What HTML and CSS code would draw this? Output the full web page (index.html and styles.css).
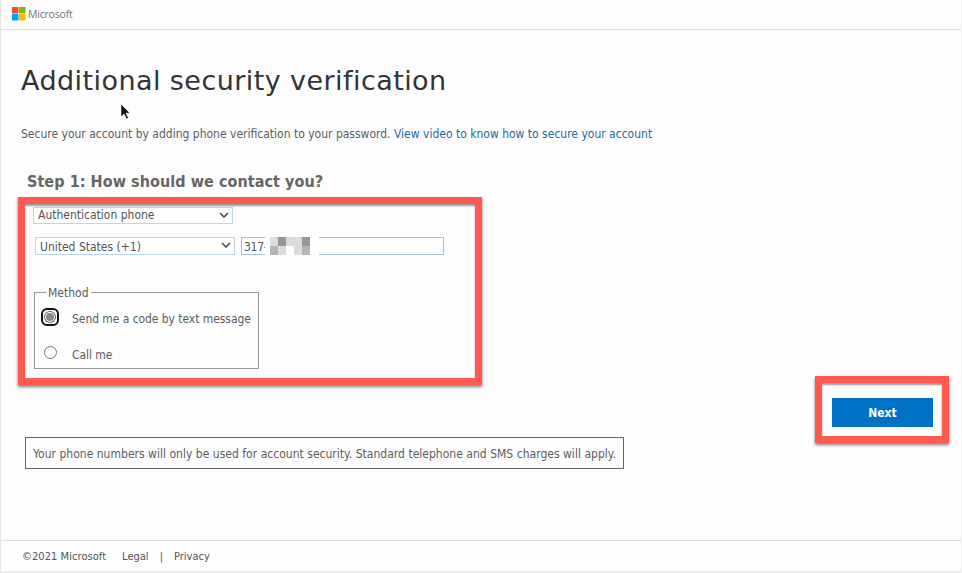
FILE: index.html
```html
<!DOCTYPE html>
<html lang="en">
<head>
<meta charset="utf-8">
<title>Additional security verification</title>
<link rel="stylesheet" href="styles.css">
</head>
<body>
<div class="page">
  <header class="topbar">
    <svg class="logo" width="14" height="14" viewBox="0 0 14 14"><rect width="6.5" height="6.5" fill="#f25022"/><rect x="7" width="6.5" height="6.5" fill="#7fba00"/><rect y="7" width="6.5" height="6.5" fill="#00a4ef"/><rect x="7" y="7" width="6.5" height="6.5" fill="#ffb900"/></svg>
    <span class="brand">Microsoft</span>
  </header>
  <main class="content">
    <h1 class="title">Additional security verification</h1>
    <p class="intro">Secure your account by adding phone verification to your password. <a class="link" href="#">View video to know how to secure your account</a></p>
    <h2 class="step">Step 1: How should we contact you?</h2>
    <div class="form">
      <div class="select select-type">Authentication phone<svg class="chev" width="10" height="6" viewBox="0 0 10 6"><path d="M1 1l4 4 4-4" fill="none" stroke="#444" stroke-width="1.5"/></svg></div>
      <div class="phone-row">
        <div class="select select-country">United States (+1)<svg class="chev" width="10" height="6" viewBox="0 0 10 6"><path d="M1 1l4 4 4-4" fill="none" stroke="#444" stroke-width="1.5"/></svg></div>
        <div class="phone">317-<div class="blur">
            <i class="w"></i><i class="l"></i><i class="d"></i><i class="l"></i><i class="l"></i><i class="d"></i><i class="w"></i>
            <i class="w"></i><i class="m"></i><i class="l"></i><i class="w"></i><i class="l"></i><i class="m"></i><i class="w"></i>
          </div>
        </div>
      </div>
      <fieldset class="method">
        <legend class="legend">Method</legend>
        <div class="option option-first"><span class="radio radio-on"><span class="dot"></span></span><span>Send me a code by text message</span></div>
        <div class="option option-second"><span class="radio"></span><span>Call me</span></div>
      </fieldset>
    </div>
    <div class="actions"><button class="next" type="button">Next</button></div>
    <div class="notice">Your phone numbers will only be used for account security. Standard telephone and SMS charges will apply.</div>
  </main>
  <footer class="footer">
    <span class="copy">©2021 Microsoft</span><a class="foot-link" href="#">Legal</a><span class="sep">|</span><a class="foot-link" href="#">Privacy</a>
  </footer>
  <div class="callout callout-form"></div>
  <div class="callout callout-next"></div>
  <svg class="cursor" width="12" height="18" viewBox="0 0 12 18"><path d="M1 1v13l3-3 2.500 5 2-1-2.500-4.800H10z" fill="#111" stroke="#fff" stroke-width=".6"/></svg>
</div>
</body>
</html>
```
FILE: styles.css
```css
* { box-sizing: border-box; }
html, body { margin: 0; height: 100%; background: #eee; overflow: hidden; }
body { font-family: "DejaVu Sans", sans-serif; font-stretch: condensed; font-size: 12px; color: #5c5c5c; }
.page { position: relative; width: 961px; height: 571px; background: #fdfdfd; border-left: 1px solid #e4e4e4; display: flex; flex-direction: column; }
.topbar { height: 30px; border-bottom: 1px solid #ddd; display: flex; align-items: center; padding: 0 0 0 11px; gap: 2px; }
.logo { flex: none; margin-top: -1px; }
.brand { font-family: "Open Sans", sans-serif; font-stretch: normal; font-size: 10.5px; letter-spacing: -.2px; color: #737373; margin-top: -2px; }
.content { flex: 1; padding: 0 0 0 20px; }
.title { margin: 32px 0 0; font-weight: 400; font-size: 27px; line-height: 38px; color: #333; font-stretch: normal; letter-spacing: .43px; }
.intro { margin: 26px 0 0; line-height: 16px; }
.link { color: #1b6a9c; text-decoration: none; }
.step { margin: 30px 0 0 6px; font-size: 16px; line-height: 20px; font-weight: 700; color: #666; letter-spacing: .06px; }
.form { margin: 19px 0 0 11px; height: 170px; display: flex; flex-direction: column; align-items: flex-start; }
.select { position: relative; width: 200px; height: 17px; border: 1px solid #b9d6ea; line-height: 15px; padding-left: 4px; background: #fff; color: #555; }
.select-type { margin-left: 1px; margin-top: -4px; }
.chev { position: absolute; right: 3px; top: 4px; }
.phone-row { display: flex; gap: 6px; margin: 14px 0 0 3px; }
.select-country { height: 18px; margin-top: -1px; line-height: 18px; }
.phone { position: relative; width: 203px; height: 18px; margin-top: -1px; border: 1px solid #a9c1d3; line-height: 18px; padding-left: 2px; background: #fff; color: #555; letter-spacing: -.3px; }
.blur { position: absolute; left: 23px; top: -1px; width: 54px; height: 18px; display: grid; grid-template-columns: 5px repeat(5, 8px) 9px; grid-template-rows: 9px 9px; background: #fff; }
.w { background: #fff; }
.l { background: #dcdcdc; }
.m { background: #b4b4b4; }
.d { background: #969696; }
.method { margin: 30px 0 0 2px; padding: 0; width: 225px; height: 84px; border: 1px solid #999; position: relative; min-inline-size: 0; }
.legend { margin-left: 11px; padding: 2px 2px 0; line-height: 12px; }
.option { display: flex; align-items: center; letter-spacing: -.06px; }
.option-first { margin: 13px 0 0 6px; }
.option-second { margin: 22px 0 0 9px; }
.radio { flex: none; width: 13px; height: 13px; border: 1px solid #777; border-radius: 50%; margin: -5px 15px 0 0; background: #fff; }
.radio-on { width: 18px; height: 18px; border: 2px solid #111; border-radius: 6px; display: flex; align-items: center; justify-content: center; margin: -4px 13px 0 0; }
.dot { border-radius: 50%; background: #888; box-shadow: 0 0 0 1px #fff, 0 0 0 2px #666; width: 8px; height: 8px; }
.actions { display: flex; justify-content: flex-end; padding-right: 28px; margin-top: 17px; }
.next { width: 101px; height: 29px; border: 0; background: #0072c6; color: #fff; font: inherit; font-weight: 700; padding: 0; }
.notice { margin: 10px 0 0 4px; width: 599px; height: 32px; border: 1px solid #666; line-height: 32px; padding-left: 7px; white-space: nowrap; letter-spacing: .02px; }
.footer { height: 31px; border-top: 1px solid #ddd; padding-left: 21px; display: flex; align-items: center; color: #555; font-size: 11px; }
.copy { margin-right: 16px; letter-spacing: .06px; }
.foot-link { color: #555; text-decoration: none; }
.sep { margin: 0 11px; }
.callout { position: absolute; border: 7px solid #ff5a4f; box-shadow: 0 2px 3px rgba(0,0,0,.5), inset 0 2px 2px rgba(0,0,0,.4); }
.callout-form { left: 17px; top: 197px; width: 464px; height: 188px; }
.callout-next { left: 814px; top: 376px; width: 134px; height: 67px; }
.cursor { position: absolute; left: 119px; top: 103px; }
```
